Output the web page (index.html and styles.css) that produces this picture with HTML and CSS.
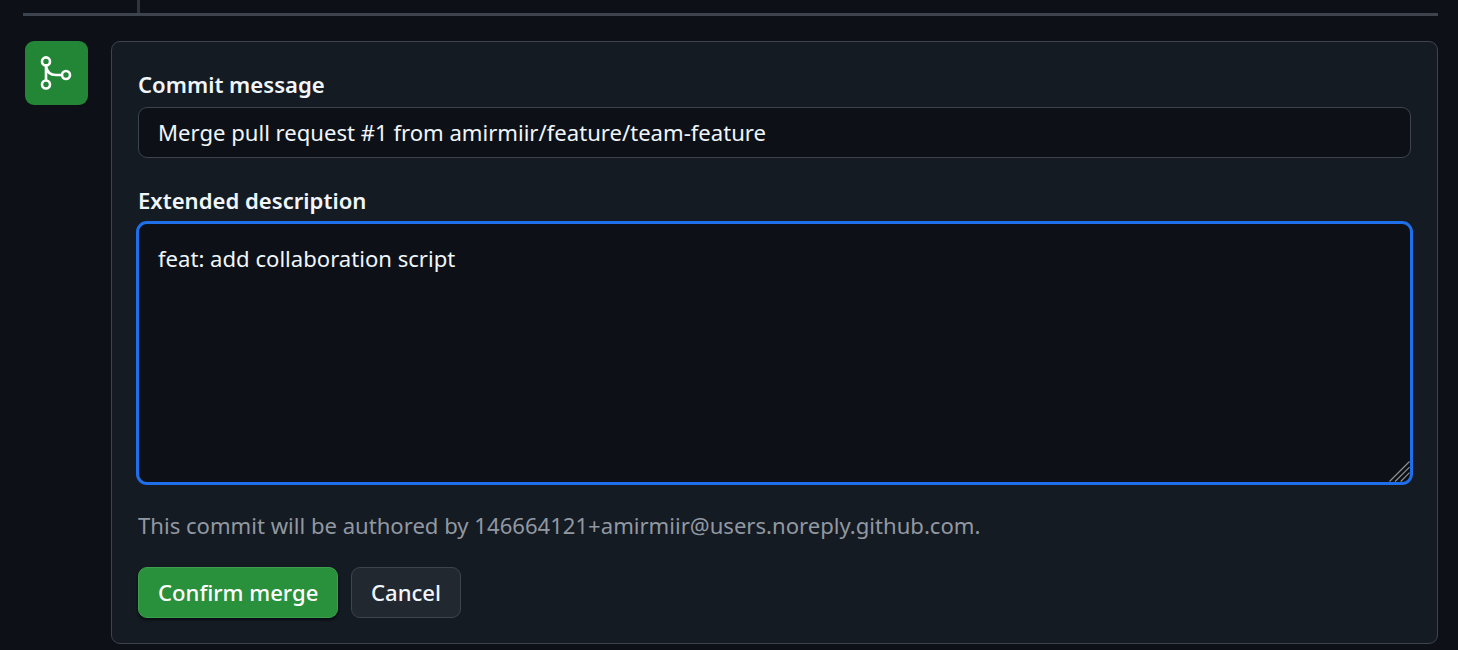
FILE: index.html
```html
<!DOCTYPE html>
<html lang="en">
<head>
<meta charset="utf-8">
<title>Confirm merge</title>
<link rel="stylesheet" href="styles.css">
</head>
<body>
<div class="timeline-end"></div>
<main class="merge">
  <div class="badge">
    <svg class="badge-icon" viewBox="0 0 63 64" aria-hidden="true"><circle cx="21" cy="20.4" r="4"/><circle cx="21" cy="43.5" r="4"/><circle cx="41" cy="34" r="4"/><path d="M21 24.4v15.1M21 25C21.8 30.5 25.5 34 31 34h6"/></svg>
  </div>
  <form class="panel">
    <label class="label" for="title">Commit message</label>
    <input class="field" id="title" type="text" value="Merge pull request #1 from amirmiir/feature/team-feature">
    <label class="label label-next" for="body">Extended description</label>
    <div class="area-wrap">
      <textarea class="area" id="body">feat: add collaboration script</textarea>
      <svg class="grip" viewBox="0 0 21 21" aria-hidden="true"><path d="M.5 20.5 20.5.5M6.1 20.5 20.5 6.1M11.7 20.5l8.8-8.8"/></svg>
    </div>
    <p class="note">This commit will be authored by 146664121+amirmiir@users.noreply.github.com.</p>
    <div class="actions">
      <button class="btn btn-primary" type="button">Confirm merge</button>
      <button class="btn" type="button">Cancel</button>
    </div>
  </form>
</main>
</body>
</html>
```

FILE: styles.css
```css
* { box-sizing: border-box; }
body {
  margin: 0;
  height: 650px;
  overflow: hidden;
  background: #0d1117;
  color: #f0f6fc;
  font: 22.1px/33px "Noto Sans", sans-serif;
}
.timeline-end {
  height: 16px;
  margin: 0 20px 0 23px;
  border-bottom: 3px solid #3d444d;
}
.timeline-end::before {
  content: "";
  display: block;
  width: 3px;
  height: 13px;
  margin-left: 114px;
  background: #2f353d;
}
.merge {
  display: flex;
  align-items: flex-start;
  gap: 23px;
  margin: 25px 20px 0 25px;
}
.badge {
  width: 63px;
  height: 64px;
  border-radius: 9px;
  background: #238636;
}
.badge-icon {
  display: block;
  width: 63px;
  height: 64px;
  fill: none;
  stroke: #fff;
  stroke-width: 2.6;
}
.panel {
  flex: 1;
  height: 603px;
  padding: 26px;
  border: 1px solid #3d444d;
  border-radius: 9px;
  background: #151b23;
}
.label { display: block; height: 33px; margin-bottom: 6px; font-weight: 600; }
.label-next { margin: 26px 0 4px; }
.field, .area {
  display: block;
  width: 100%;
  border: 1px solid #3d444d;
  border-radius: 9px;
  background: #0d1117;
  color: inherit;
  font: inherit;
  outline: none;
}
.field { height: 51px; padding: 0 19px 2px; }
.area-wrap { position: relative; margin: 0 -2px; }
.area {
  height: 264px;
  padding: 18px 19px;
  border: 3px solid #1f6feb;
  border-radius: 11px;
  resize: none;
}
.grip {
  position: absolute;
  right: 3px;
  bottom: 3px;
  width: 21px;
  height: 21px;
  fill: none;
  stroke: #909295;
  stroke-width: 1.1;
}
.note { margin: 24px 0 25px; color: #9198a1; }
.actions { display: flex; gap: 13px; }
.btn {
  height: 51px;
  padding: 0 19px;
  border: 1px solid #3d444d;
  border-radius: 9px;
  background: #212830;
  color: #f0f6fc;
  font: 500 22.1px/33px "Noto Sans", sans-serif;
  white-space: nowrap;
}
.btn-primary {
  width: 200px;
  border-color: #3f9d4e;
  background: #29903b;
  color: #fff;
  box-shadow: 0 2px 3px rgba(1, 4, 9, 0.7);
}
```
